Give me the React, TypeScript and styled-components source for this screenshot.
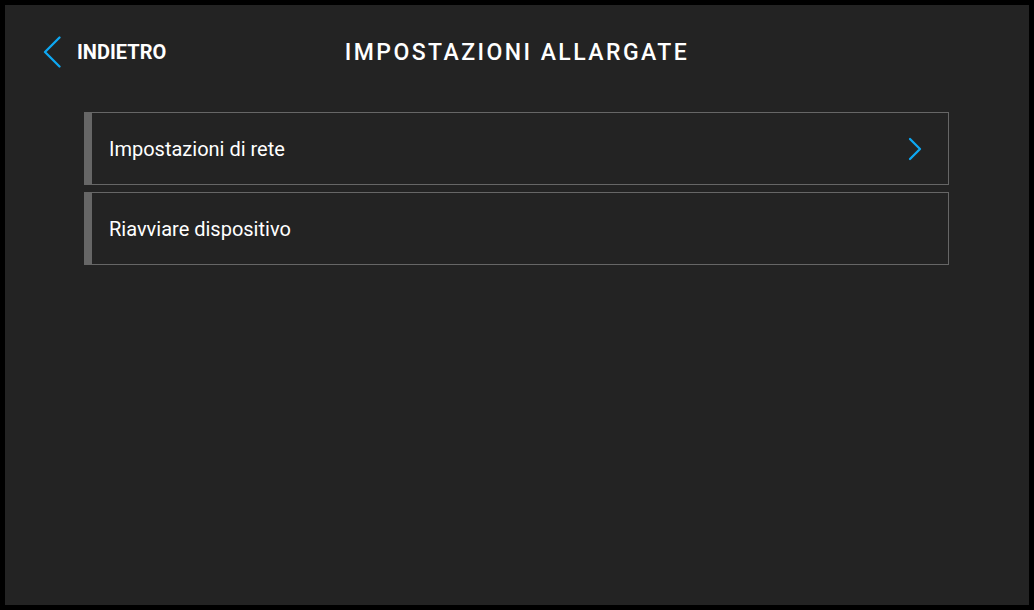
import React from 'react';
import styled, { createGlobalStyle } from 'styled-components';

const GlobalStyle = createGlobalStyle`
  html, body {
    margin: 0;
    padding: 0;
    background: #000000;
  }
  body {
    font-family: Roboto, "Liberation Sans", sans-serif;
    color: #ffffff;
  }
`;

const Screen = styled.div`
  box-sizing: border-box;
  width: 1024px;
  height: 600px;
  margin: 5px;
  background: #232323;
  display: flex;
  flex-direction: column;
`;

const Header = styled.div`
  position: relative;
  height: 92px;
  display: flex;
  align-items: center;
  justify-content: center;
  padding-top: 2px;
  box-sizing: border-box;
`;

const BackButton = styled.button`
  position: absolute;
  left: 38px;
  top: 31px;
  display: flex;
  align-items: center;
  gap: 16px;
  background: none;
  border: none;
  padding: 0;
  color: #ffffff;
  font-family: Roboto, "Liberation Sans", sans-serif;
  font-weight: 700;
  font-size: 20px;
  cursor: pointer;
`;

const Title = styled.h1`
  margin: 0;
  font-size: 23px;
  font-weight: 500;
  letter-spacing: 2.45px;
  text-transform: uppercase;
`;

const List = styled.div`
  display: flex;
  flex-direction: column;
  gap: 7px;
  margin: 15px 80px 0 79px;
`;

const Row = styled.div`
  box-sizing: border-box;
  height: 73px;
  display: flex;
  align-items: center;
  justify-content: space-between;
  border: 1px solid #666666;
  border-left: 8px solid #666666;
  padding: 0 26px 0 17px;
  font-size: 20px;
  cursor: pointer;
`;

const Label = styled.span`
  color: #ffffff;
`;

function ChevronLeft() {
  return (
    <svg width="18" height="32" viewBox="0 0 18 32">
      <path d="M16.5 1.5 L2 16 L16.5 30.5" fill="none" stroke="#0ea8f2" strokeWidth="2.3" strokeLinecap="round" strokeLinejoin="round" />
    </svg>
  );
}

function ChevronRight() {
  return (
    <svg width="14" height="24" viewBox="0 0 14 24">
      <path d="M2 2 L12 12 L2 22" fill="none" stroke="#0ea8f2" strokeWidth="2.3" strokeLinecap="round" strokeLinejoin="round" />
    </svg>
  );
}

const items = [
  { label: 'Impostazioni di rete', arrow: true },
  { label: 'Riavviare dispositivo', arrow: false },
];

export default function App() {
  return (
    <>
      <GlobalStyle />
      <Screen>
        <Header>
          <BackButton>
            <ChevronLeft />
            INDIETRO
          </BackButton>
          <Title>Impostazioni allargate</Title>
        </Header>
        <List>
          {items.map((item) => (
            <Row key={item.label}>
              <Label>{item.label}</Label>
              {item.arrow && <ChevronRight />}
            </Row>
          ))}
        </List>
      </Screen>
    </>
  );
}
